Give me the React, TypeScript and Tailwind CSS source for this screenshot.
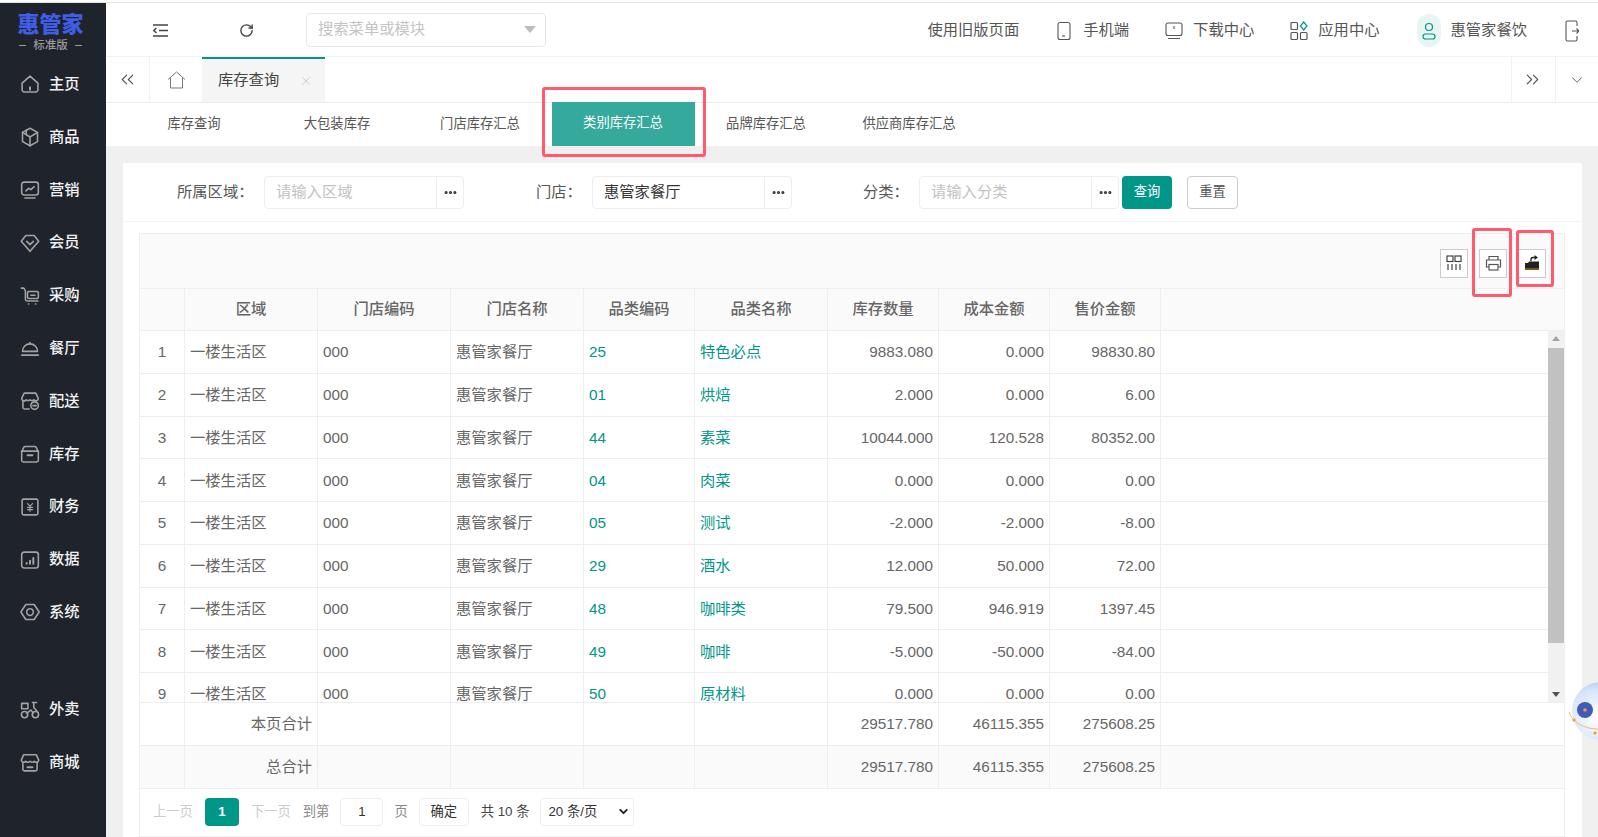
import React from "react";
import { ChevronDown, ChevronsLeft, ChevronsRight, Ellipsis, RotateCw, X } from "lucide-react";

const S = ({ children, size = 20, className = "" }: { children: React.ReactNode; size?: number; className?: string }) => (
  <svg width={size} height={size} viewBox="0 0 24 24" fill="none" stroke="currentColor" strokeWidth={1.9} strokeLinecap="round" strokeLinejoin="round" className={className}>
    {children}
  </svg>
);

const navIcons: Record<string, React.ReactNode> = {
  主页: <><path d="M2.500 11 12 2.500l9.500 8.500v8a2.500 2.500 0 0 1-2.500 2.500H5A2.500 2.500 0 0 1 2.500 19z" /><path d="M12 16v3" strokeWidth={2.400} /></>,
  商品: <><path d="M12 1.500 21 6.500v11L12 22.500 3 17.500v-11z" /><path d="M3 6.500 12 12l9-5.500M12 12v10.500" /><path d="M7.500 4v5" /></>,
  营销: <><rect x="2" y="2.500" width="20" height="15.500" rx="3" /><path d="m7 13 3.500-3 2.500 1.500 4-3.500" /><path d="M6 21.500h12" /></>,
  会员: <><path d="M7 3h10l5.500 7L12 22 1.500 10z" /><path d="m8 10 4 4 4-4" /></>,
  采购: <><path d="M1.500 2.500h3l2 3V16a2 2 0 0 0 2 2h13" /><rect x="9" y="6.500" width="13" height="8.500" rx="1.500" /><path d="M13 11h5M10 21.500h.5M18.500 21.500h.5" /></>,
  餐厅: <><path d="M3 16a9 9 0 0 1 18 0z" /><path d="M12 7V5.500" /><path d="M2 20.500h20" /></>,
  配送: <><path d="M5 2.500h14l3 6.500a3 3 0 0 1-5.500 1.500 3.300 3.300 0 0 1-4.500 0 3.300 3.300 0 0 1-4.500 0A3 3 0 0 1 2 9z" /><path d="M3.500 12v7.500a2 2 0 0 0 2 2H11" /><circle cx="17.500" cy="17.500" r="4.500" /><path d="M15.500 17.500h4" /></>,
  库存: <><path d="M2.500 8.500 4.500 4a2 2 0 0 1 1.800-1h11.400a2 2 0 0 1 1.800 1l2 4.500" /><path d="M2 8.500h20V19.500a2 2 0 0 1-2 2H4a2 2 0 0 1-2-2z" /><path d="M9 13.500h6" strokeWidth={2.200} /></>,
  财务: <><rect x="2.500" y="2.500" width="19" height="19" rx="2" /><path d="M9 8l3 3 3-3M12 11v6M9 12.500h6M9 15h6" strokeWidth={1.500} /></>,
  数据: <><rect x="2" y="2.500" width="20" height="19" rx="3" /><path d="M8 16.500v-1M12 16.500v-3.500M16 16.500v-7" strokeWidth={2.400} /></>,
  系统: <><path d="M7 3h10l6 9-6 9H7l-6-9z" /><circle cx="12" cy="12" r="4" /></>,
  外卖: <><circle cx="5.500" cy="17.500" r="3.800" /><circle cx="18.500" cy="17.500" r="3.800" /><path d="M2 4h7.500v6.500H2zM15 3h5M16.500 3v6l4 4.500M8 16l5-4 3 4" /></>,
  商城: <><path d="M4.500 2h15l3 6.500a3 3 0 0 1-5.300 1.500 3.500 3.500 0 0 1-5.200 0 3.500 3.500 0 0 1-5.200 0 3 3 0 0 1-5.300-1.500z" /><path d="M3.500 11v8.500a2 2 0 0 0 2 2h13a2 2 0 0 0 2-2V11" /><path d="M9 17h6" strokeWidth={2.400} /></>,
};

const NavItem = ({ label, className = "h-[52.800px]" }: { label: string; className?: string }) => (
  <div className={`flex items-center pl-[20px] text-[15.300px] font-medium text-[#f2f2f2] ${className}`}>
    <span className="text-[#a3a3a3]"><S>{navIcons[label]}</S></span>
    <span className="ml-[9px]">{label}</span>
  </div>
);

const Sidebar = () => (
  <aside className="h-full w-[106px] shrink-0 overflow-hidden bg-[#1f232b]">
    <div className="flex h-[55px] flex-col items-center pr-[5px] pt-[8px]">
      <div className="text-[22px] font-black leading-[27px] text-[#3f5ee8]">惠管家</div>
      <div className="mt-[1px] flex items-center gap-[7px] text-[11.500px] font-medium leading-[13px] text-[#9a9a9a]">
        <span className="h-px w-[7px] bg-[#9a9a9a]" />标准版<span className="h-px w-[7px] bg-[#9a9a9a]" />
      </div>
    </div>
    {["主页", "商品", "营销", "会员", "采购", "餐厅", "配送", "库存", "财务", "数据", "系统"].map((l) => <NavItem key={l} label={l} />)}
    <NavItem label="外卖" className="mt-[44px] h-[53.500px]" />
    <NavItem label="商城" />
  </aside>
);

const HeadLink = ({ icon, label, className = "" }: { icon?: React.ReactNode; label: string; className?: string }) => (
  <div className={`flex items-center text-[15.300px] text-[#555] ${className}`}>
    {icon}<span>{label}</span>
  </div>
);

const Header = () => (
  <header className="flex h-[54px] shrink-0 items-center border-b border-[#f2f2f2] bg-white pt-[2px]">
    <svg width="15" height="13" viewBox="0 0 15 13" className="ml-[47px] text-[#444]" fill="none" stroke="currentColor" strokeWidth="1.400">
      <path d="M0 1h15M6 6.500h9M0 12h15" /><path d="M3.500 4 .8 6.500 3.500 9" />
    </svg>
    <RotateCw size={15} strokeWidth={2.200} className="ml-[71px] text-[#444]" />
    <div className="-mt-[2px] ml-[52px] flex h-[34px] w-[240px] items-center justify-between rounded-sm border border-[#e8e8e8] pl-[11px] pr-[9px] text-[15.300px] text-[#c4c4c4]">
      <span>搜索菜单或模块</span>
      <span className="h-0 w-0 border-x-[6px] border-t-[7px] border-x-transparent border-t-[#bdbdbd]" />
    </div>
    <div className="flex-1" />
    <HeadLink label="使用旧版页面" />
    <HeadLink className="ml-[38px]" label="手机端" icon={
      <svg width="14" height="20" viewBox="0 0 14 20" fill="none" stroke="#555" strokeWidth="1.100" className="mr-[12px]"><rect x="1" y="1.500" width="12" height="17" rx="2" /><path d="M5 15h3" /></svg>} />
    <HeadLink className="ml-[36px]" label="下载中心" icon={
      <svg width="18" height="18" viewBox="0 0 18 18" fill="none" stroke="#555" strokeWidth="1.100" className="mr-[10px]"><rect x="1" y="1" width="16" height="12.500" rx="2" /><path d="M9 4v3M3 16.500h12" /></svg>} />
    <HeadLink className="ml-[36px]" label="应用中心" icon={
      <svg width="18" height="20" viewBox="0 0 18 20" fill="none" strokeWidth="1.200" className="mr-[10px]"><g stroke="#555"><rect x="1" y="1.500" width="6.500" height="7" rx="1" /><rect x="1" y="11.500" width="6.500" height="7" rx="1" /><rect x="10.500" y="11.500" width="6.500" height="7" rx="1" /></g><path d="M13.700 1 17 5l-3.300 4-3.300-4z" stroke="#009688" /></svg>} />
    <HeadLink className="ml-[37px] text-[#444]" label="惠管家餐饮" icon={
      <span className="mr-[10px] flex h-[33px] w-[24px] items-center justify-center rounded-full bg-[#e8f5f3]">
        <svg width="14" height="18" viewBox="0 0 14 18" fill="none" stroke="#009688" strokeWidth="1.200"><circle cx="7" cy="5" r="3.500" /><rect x="1" y="12" width="12" height="5" rx="2.500" /></svg>
      </span>} />
    <svg width="14" height="24" viewBox="0 0 14 24" fill="none" stroke="#555" strokeWidth="1.100" className="ml-[38px] mr-[19px]">
      <path d="M12 7V3.500A1.500 1.500 0 0 0 10.500 2h-8A1.500 1.500 0 0 0 1 3.500v17A1.500 1.500 0 0 0 2.500 22h8a1.500 1.500 0 0 0 1.500-1.500V17" /><path d="M7 12h7M11.500 9.500 14 12l-2.500 2.500" />
    </svg>
  </header>
);

const TabBar = () => (
  <div className="flex h-[46px] shrink-0 border-b border-[#ececec] bg-white shadow-[0_1px_2px_rgba(0,0,0,0.04)]">
    <div className="flex w-[44px] items-center justify-center border-r border-[#f2f2f2] text-[#555]"><ChevronsLeft size={21} strokeWidth={1.300} /></div>
    <div className="flex w-[52px] items-center justify-center text-[#777]">
      <svg width="19" height="18" viewBox="0 0 19 18" fill="none" stroke="currentColor" strokeWidth="1"><path d="M1 8.500 9.500 1 18 8.500M3.500 7v10h12V7" /></svg>
    </div>
    <div className="flex w-[123px] items-center border-t-2 border-[#009688] bg-[#f5f5f5] pl-[16px] text-[15.300px] text-[#444]">
      库存查询
      <X size={14} strokeWidth={1.200} className="ml-[20px] text-[#bbb]" />
    </div>
    <div className="flex-1" />
    <div className="flex w-[45px] items-center justify-center border-x border-[#f2f2f2] pr-[3px] text-[#555]"><ChevronsRight size={21} strokeWidth={1.300} /></div>
    <div className="flex w-[42px] items-center justify-center text-[#555]"><ChevronDown size={18} strokeWidth={1.200} /></div>
  </div>
);

const subTabs = ["库存查询", "大包装库存", "门店库存汇总", "类别库存汇总", "品牌库存汇总", "供应商库存汇总"];

const SubTabs = () => (
  <div className="flex h-[43px] shrink-0 bg-white pl-[16.500px] text-[13.300px] text-[#555]">
    {subTabs.map((t, i) => (
      <div key={t} className={`relative flex w-[143px] items-center justify-center pb-[2px] ${i === 3 ? "-mt-px bg-[#35a99c] text-white" : ""}`}>
        {t}
        {i === 3 && <span className="absolute -bottom-[11px] -left-[10px] -right-[11px] -top-[15px] rounded-[3px] border-[3px] border-[#ff5a6e]" />}
      </div>
    ))}
  </div>
);

const Picker = ({ value, placeholder, className = "" }: { value?: string; placeholder?: string; className?: string }) => (
  <div className={`flex h-[33px] w-[200px] items-center rounded-sm border border-[#eeeeee] text-[15.300px] ${className}`}>
    <span className={`flex-1 pl-[11px] ${value ? "text-[#333]" : "text-[#c2c2c2]"}`}>{value ?? placeholder}</span>
    <span className="flex h-full w-[27px] items-center justify-center border-l border-[#eeeeee] text-[#333]"><Ellipsis size={15} strokeWidth={3} /></span>
  </div>
);

const FilterBar = () => (
  <div className="flex h-[59px] items-center border-b border-[#f3f3f3] text-[15.300px] text-[#555]">
    <span className="ml-[54px] w-[87px]">所属区域：</span>
    <Picker placeholder="请输入区域" />
    <span className="ml-[72px] w-[56px]">门店：</span>
    <Picker value="惠管家餐厅" />
    <span className="ml-[71px] w-[56px]">分类：</span>
    <Picker placeholder="请输入分类" />
    <button className="ml-[3px] flex h-[33px] w-[50px] items-center justify-center rounded-sm bg-[#009688] text-[13.300px] text-white">查询</button>
    <button className="ml-[15px] flex h-[33px] w-[51px] items-center justify-center rounded-sm border border-[#cccccc] text-[13.300px] text-[#555]">重置</button>
  </div>
);

const widths = "grid grid-cols-[45px_133px_133px_133px_111px_133px_111px_111px_111px_1fr]";
const cell = "flex h-full items-center border-r border-[#eeeeee] px-[5px]";
const headers = ["", "区域", "门店编码", "门店名称", "品类编码", "品类名称", "库存数量", "成本金额", "售价金额"];

const rows = [
  ["25", "特色必点", "9883.080", "0.000", "98830.80"],
  ["01", "烘焙", "2.000", "0.000", "6.00"],
  ["44", "素菜", "10044.000", "120.528", "80352.00"],
  ["04", "肉菜", "0.000", "0.000", "0.00"],
  ["05", "测试", "-2.000", "-2.000", "-8.00"],
  ["29", "酒水", "12.000", "50.000", "72.00"],
  ["48", "咖啡类", "79.500", "946.919", "1397.45"],
  ["49", "咖啡", "-5.000", "-50.000", "-84.00"],
  ["50", "原材料", "0.000", "0.000", "0.00"],
];

const ToolBtn = ({ children, mark }: { children: React.ReactNode; mark?: string }) => (
  <div className="relative flex h-[29px] w-[28px] items-center justify-center border border-[#cccccc] bg-white">
    {children}
    {mark && <span className={`absolute rounded-[3px] border-[3px] border-[#ff5a6e] ${mark}`} />}
  </div>
);

const Toolbar = () => (
  <div className="flex h-[55px] items-center justify-end gap-[11px] border-b border-[#eeeeee] bg-[#fafafa] pr-[18px] pt-[4px]">
    <ToolBtn>
      <svg width="16" height="16" viewBox="0 0 16 16" fill="none" stroke="#444" strokeWidth="1.200"><rect x="1" y="1" width="6" height="5.500" /><rect x="9" y="1" width="6" height="5.500" /><path d="M2 9v6M6 9v6M10 9v6M14 9v6" /></svg>
    </ToolBtn>
    <ToolBtn mark="-left-[8px] -right-[6px] -top-[22px] -bottom-[20px]">
      <svg width="17" height="16" viewBox="0 0 17 16" fill="none" stroke="#555" strokeWidth="1.200"><path d="M4 5V1.500h9V5M4 12H1.500V5h14v7H13" /><rect x="4" y="9.500" width="9" height="5.500" /></svg>
    </ToolBtn>
    <ToolBtn mark="-left-[3px] -right-[9px] -top-[20px] -bottom-[10px]">
      <svg width="16" height="16" viewBox="0 0 16 16"><path d="M1 8h3l1-1.500h10V15H1z" fill="#222" /><path d="M7 6V4.500a2 2 0 0 1 2-2h2" fill="none" stroke="#222" strokeWidth="1.400" /><path d="M10.500 0 14 2.500 10.500 5z" fill="#222" /><path d="M1 14h14" stroke="#d98a1e" strokeWidth="1" /></svg>
    </ToolBtn>
  </div>
);

const Scrollbar = () => (
  <div className="flex w-[16px] shrink-0 flex-col items-center bg-[#f1f1f1]">
    <span className="mt-[5px] h-0 w-0 border-x-[4px] border-b-[5px] border-x-transparent border-b-[#a3a3a3]" />
    <span className="mt-[7px] h-[295px] w-full bg-[#c1c1c1]" />
    <span className="mt-[49px] h-0 w-0 border-x-[4px] border-t-[5px] border-x-transparent border-t-[#505050]" />
  </div>
);

const TotalRow = ({ label, shade, v }: { label: string; shade?: boolean; v: string[] }) => (
  <div className={`${widths} h-[43px] border-b border-[#eeeeee] text-[15.300px] text-[#666] ${shade ? "bg-[#fafafa]" : "bg-white"}`}>
    <div className={cell} />
    <div className={`${cell} justify-end`}>{label}</div>
    <div className={cell} /><div className={cell} /><div className={cell} /><div className={cell} />
    {v.map((x) => <div key={x} className={`${cell} justify-end`}>{x}</div>)}
    <div />
  </div>
);

const Pagination = () => (
  <div className="flex h-[47px] items-center pb-[2px] pl-[13px] text-[13.300px] text-[#666]">
    <span className="text-[#cccccc]">上一页</span>
    <span className="ml-[12px] flex h-[28px] w-[34px] items-center justify-center rounded-sm bg-[#009688] font-bold text-white">1</span>
    <span className="ml-[12px] text-[#cccccc]">下一页</span>
    <span className="ml-[12px] text-[#888]">到第</span>
    <span className="ml-[11px] flex h-[28px] w-[43px] items-center justify-center rounded-sm border border-[#eeeeee] text-[#333]">1</span>
    <span className="ml-[11px] text-[#888]">页</span>
    <span className="ml-[11px] flex h-[28px] w-[50px] items-center justify-center rounded-sm border border-[#eeeeee] text-[#333]">确定</span>
    <span className="ml-[12px] text-[#444]">共 10 条</span>
    <span className="ml-[11px] flex h-[28px] w-[94px] items-center justify-between rounded-sm border border-[#eeeeee] pl-[7px] pr-[3px] text-[#333]">
      20 条/页<ChevronDown size={13} strokeWidth={3.500} className="text-[#222]" />
    </span>
  </div>
);

const DataTable = () => (
  <div className="ml-[16px] mr-[17px] mt-[11px] border border-[#eeeeee]">
    <Toolbar />
    <div className={`${widths} h-[42px] border-b border-[#eeeeee] bg-[#fafafa] text-[15.300px] font-medium text-[#666]`}>
      {headers.map((h, i) => <div key={i} className={`${cell} justify-center`}>{h}</div>)}
      <div />
    </div>
    <div className="flex h-[372px] overflow-hidden border-b border-[#eeeeee]">
      <div className="min-w-0 flex-1">
        {rows.map((r, i) => (
          <div key={r[0]} className={`${widths} h-[42.750px] border-b border-[#eeeeee] text-[15.300px] text-[#666] [&>div]:pt-[2px]`}>
            <div className={`${cell} justify-center`}>{i + 1}</div>
            <div className={cell}>一楼生活区</div>
            <div className={cell}>000</div>
            <div className={cell}>惠管家餐厅</div>
            <div className={`${cell} text-[#009688]`}>{r[0]}</div>
            <div className={`${cell} text-[#009688]`}>{r[1]}</div>
            <div className={`${cell} justify-end`}>{r[2]}</div>
            <div className={`${cell} justify-end`}>{r[3]}</div>
            <div className={`${cell} justify-end`}>{r[4]}</div>
            <div />
          </div>
        ))}
      </div>
      <Scrollbar />
    </div>
    <TotalRow label="本页合计" v={["29517.780", "46115.355", "275608.25"]} />
    <TotalRow label="总合计" shade v={["29517.780", "46115.355", "275608.25"]} />
    <Pagination />
  </div>
);

const Orb = () => (
  <svg width="30" height="70" viewBox="0 0 30 70" className="absolute bottom-[87px] right-0">
    <defs>
      <radialGradient id="orb" cx="0.4" cy="0.6" r="0.8">
        <stop offset="0" stopColor="#ffffff" />
        <stop offset="0.6" stopColor="#d5e3fa" />
        <stop offset="1" stopColor="#86abea" />
      </radialGradient>
    </defs>
    <circle cx="33" cy="31" r="29" fill="url(#orb)" />
    <circle cx="17" cy="30" r="8" fill="#3f5cb8" />
    <circle cx="17" cy="30" r="1.800" fill="#f09a3e" />
    <path d="M1 32c3 10 15 17 29 17" fill="none" stroke="#f5b77a" strokeWidth="1" />
    <circle cx="6" cy="40" r="1.600" fill="#f09a3e" />
    <circle cx="27" cy="53" r="1.600" fill="#f09a3e" />
  </svg>
);

export default function App() {
  return (
    <div className="relative flex h-[837px] w-[1598px] flex-col overflow-hidden bg-white [font-family:'Liberation_Sans','Noto_Sans_CJK_SC',sans-serif]">
      <div className="h-[3px] shrink-0 border-b border-[#e4e4e4] pt-[2px]" />
      <div className="flex min-h-0 flex-1">
        <Sidebar />
        <main className="flex min-w-0 flex-1 flex-col">
          <Header />
          <TabBar />
          <SubTabs />
          <div className="min-h-0 flex-1 bg-[#f0f0f0] pl-[17px] pr-[16px] pt-[17px]">
            <div className="h-full bg-white">
              <FilterBar />
              <DataTable />
            </div>
          </div>
        </main>
      </div>
      <Orb />
    </div>
  );
}
